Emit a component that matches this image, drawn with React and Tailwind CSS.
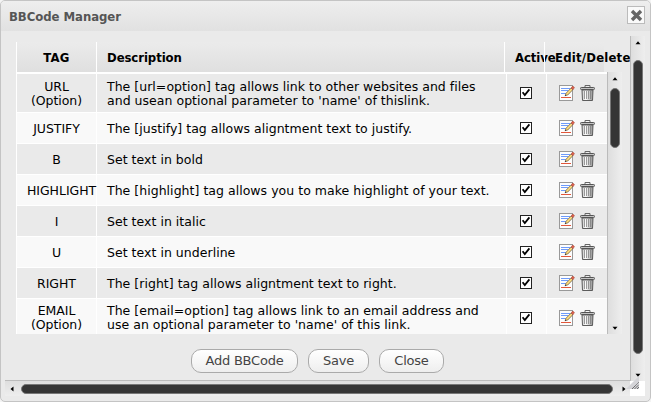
import React from 'react';

const ROWS = [
  { tag: ['URL', '(Option)'], text: ["The [url=option] tag allows link to other websites and files", "and usean optional parameter to 'name' of thislink."], h: 'h-[39px]', cell: 'pt-[2px]' },
  { tag: ['JUSTIFY'], text: ['The [justify] tag allows aligntment text to justify.'], h: 'h-[31px]', cell: 'pt-px' },
  { tag: ['B'], text: ['Set text in bold'], h: 'h-[31px]', cell: 'pt-px' },
  { tag: ['HIGHLIGHT'], text: ['The [highlight] tag allows you to make highlight of your text.'], h: 'h-[31px]', cell: 'pt-px' },
  { tag: ['I'], text: ['Set text in italic'], h: 'h-[31px]', cell: 'pt-px' },
  { tag: ['U'], text: ['Set text in underline'], h: 'h-[31px]', cell: 'pt-px' },
  { tag: ['RIGHT'], text: ['The [right] tag allows aligntment text to right.'], h: 'h-[31px]', cell: 'pt-px' },
  { tag: ['EMAIL', '(Option)'], text: ['The [email=option] tag allows link to an email address and', "use an optional parameter to 'name' of this link."], h: 'h-[39px]', cell: '' },
];

function EditIcon() {
  return (
    <svg width="16" height="16" viewBox="0 0 16 16">
      <rect x=".5" y=".5" width="13" height="15" fill="#fdfdfd" stroke="#999" />
      <path d="M2 3.5h9M2 5.5h7M2 8.5h5" stroke="#6e9bfa" />
      <path d="M2 12.5h10" stroke="#e2573b" />
      <path d="M6.2 10.7 7 8.2 12 3l1.8 1.8-5 5.2z" fill="#f0c65c" stroke="#6d675f" strokeWidth=".7" />
      <path d="m8 8.8 5-5" stroke="#fff0a8" strokeWidth=".8" />
      <path d="m12 3 1.8-2L15.4 2.6 14 4.8z" fill="#dc6049" stroke="#a24b40" strokeWidth=".6" />
      <path d="m5.8 11.2.6-1.6 1 .9z" fill="#333" />
    </svg>
  );
}

function TrashIcon() {
  return (
    <svg width="15" height="16" viewBox="0 0 15 16">
      <defs>
        <linearGradient id="can">
          <stop offset="0" stopColor="#c4c4c4" /><stop offset=".35" stopColor="#fff" /><stop offset="1" stopColor="#8d8d8d" />
        </linearGradient>
      </defs>
      <path d="M5 2V.5h5V2" fill="none" stroke="#666" />
      <path d="M2 5h11l-.5 10.5h-10z" fill="url(#can)" stroke="#5c5c5c" />
      <path d="M4.5 6v8M6.5 6v8M8.5 6v8M10.5 6v8" stroke="#777" strokeWidth=".7" />
      <rect x=".5" y="2.5" width="14" height="2" rx=".8" fill="#c4c4c4" stroke="#555" />
    </svg>
  );
}

function CheckBox() {
  return (
    <svg width="12" height="12" viewBox="0 0 12 12">
      <rect x=".5" y=".5" width="11" height="11" fill="#fff" stroke="#222" />
      <path d="M2.6 5.2 4.8 8 9.4 2.4" fill="none" stroke="#000" strokeWidth="1.8" />
    </svg>
  );
}

function Arrow({ d, className }) {
  return <svg width="6" height="6" viewBox="0 0 6 6" className={className}><path d={d} fill="#000" /></svg>;
}
const UP = 'M0.5 4.3 3 1.3 5.5 4.3z';
const DOWN = 'M0.5 1.7 3 4.7 5.5 1.7z';
const LEFT = 'M4.5 0.5 1.5 3 4.5 5.5z';
const RIGHT = 'M1.5 0.5 4.5 3 1.5 5.5z';

function Row({ row, odd }) {
  return (
    <div className={'flex shrink-0 border-b border-white ' + row.h + (odd ? ' bg-[#f9f9f9]' : ' bg-[#eaeaea]')}>
      <div className={'flex w-[81px] shrink-0 flex-col justify-center border-x border-white px-[10px] text-center ' + row.cell}>
        {row.tag.map((t) => <span key={t} className="block whitespace-nowrap tracking-[-0.05px]">{t}</span>)}
      </div>
      <div className={'flex w-[409px] shrink-0 flex-col justify-center pl-[10px] ' + row.cell}>
        {row.text.map((t) => <span key={t} className="block whitespace-nowrap">{t}</span>)}
      </div>
      <div className="flex w-[40px] shrink-0 items-center justify-center border-l border-white pr-[1px]"><CheckBox /></div>
      <div className="flex w-[61px] shrink-0 items-center gap-[5px] border-l border-white pl-[12px]"><EditIcon /><TrashIcon /></div>
    </div>
  );
}

function Button({ children, className }) {
  return <button className={'flex h-[24px] items-center justify-center whitespace-nowrap rounded-[10px] border border-[#aaa] bg-gradient-to-b from-white to-[#eee] text-[#444] ' + className}>{children}</button>;
}

export default function App() {
  return (
    <div className="h-[402px] w-[651px] overflow-hidden bg-[#f4f4f4] font-['DejaVu_Sans',Verdana,sans-serif] text-[12.5px] leading-[14px] tracking-[0.03px] text-black">
      <div className="flex h-full flex-col overflow-hidden rounded-[5px] border border-[#c4c4c4] bg-[#eaeaea]">
        <header className="flex h-[30px] shrink-0 items-center justify-between bg-gradient-to-b from-[#eee] to-[#e1e1e1] pl-[8px] pr-[5px]">
          <h1 className="whitespace-nowrap pt-[2px] font-['DejaVu_Sans_Condensed','DejaVu_Sans',sans-serif] text-[13px] font-bold tracking-[-0.05px] text-[#555] [font-stretch:condensed]">BBCode Manager</h1>
          <button className="-mt-[2px] flex h-[18px] w-[18px] items-center justify-center border border-[#bbb] bg-[#fafafa]" aria-label="Close dialog">
            <svg width="13" height="13" viewBox="0 0 13 13"><path d="m2 2 9 9M11 2l-9 9" stroke="#666" strokeWidth="3.4" /></svg>
          </button>
        </header>
        <div className="mt-[5px] flex h-[345px] shrink-0 pl-[4px]">
          <main className="w-[625px] shrink-0 overflow-hidden border-b border-[#bbb] pl-[11px] pt-[6px]">
            <div className="flex h-[30px] w-[588px] bg-gradient-to-b from-[#ebebeb] to-[#dfdfdf] font-['DejaVu_Sans_Condensed','DejaVu_Sans',sans-serif] text-[13px] font-bold tracking-[-0.08px] [font-stretch:condensed]">
              <div className="flex w-[81px] shrink-0 items-center justify-center border-x border-white pt-[2px] tracking-[0.3px]">TAG</div>
              <div className="flex w-[407px] shrink-0 items-center pl-[10px] pt-[2px]">Description</div>
              <div className="flex w-[40px] shrink-0 items-center border-l border-white pl-[10px] pt-[2px]">Active</div>
              <div className="flex w-[60px] shrink-0 items-center whitespace-nowrap border-l border-white pl-[10px] pt-[2px] tracking-[0.2px]">Edit/Delete</div>
            </div>
            <div className="flex h-[262px]">
              <div className="w-[591px] shrink-0 overflow-hidden border-t-2 border-white">
                {ROWS.map((row, i) => <Row key={row.tag[0]} row={row} odd={i % 2 === 1} />)}
              </div>
              <div className="flex w-[15px] shrink-0 flex-col items-center border-l border-[#bbb] bg-gradient-to-r from-[#dedede] to-[#eee]">
                <Arrow d={UP} className="mt-[4px] shrink-0" />
                <div className="mt-[6px] h-[60px] w-[10px] shrink-0 rounded-full border border-[#777] bg-[#353535]" />
                <Arrow d={DOWN} className="mb-[3px] mt-auto shrink-0" />
              </div>
            </div>
            <div className="mt-[15px] flex pl-[175px] text-[13px] tracking-[-0.22px]">
              <Button className="w-[107px]">Add BBCode</Button>
              <Button className="ml-[10px] w-[61px]">Save</Button>
              <Button className="ml-[10px] w-[65px]">Close</Button>
            </div>
          </main>
          <div className="flex w-[15px] shrink-0 flex-col items-center border-l border-[#bbb] bg-gradient-to-r from-[#dedede] to-[#eee]">
            <Arrow d={UP} className="mt-[4px] shrink-0" />
            <div className="mt-[14px] h-[294px] w-[10px] shrink-0 rounded-full border border-[#777] bg-[#353535]" />
            <Arrow d={DOWN} className="mb-[3px] mt-auto shrink-0" />
          </div>
        </div>
        <div className="flex h-[15px] shrink-0 pl-[4px]">
          <div className="flex w-[625px] shrink-0 items-center bg-gradient-to-b from-[#dedede] to-[#eee]">
            <Arrow d={LEFT} className="ml-[4px] shrink-0" />
            <div className="ml-[6px] h-[10px] w-[592px] shrink-0 rounded-full border border-[#777] bg-[#353535]" />
            <Arrow d={RIGHT} className="ml-[8px] shrink-0" />
          </div>
          <div className="relative w-[15px] shrink-0 bg-white">
            <svg className="absolute -left-[4px] -top-[5px]" width="14" height="14" viewBox="0 0 14 14">
              <path d="M0 13 13 0v13z" fill="#d4d4d8" />
              <path d="M6 13 13 6M8.5 13 13 8.5M11 13l2-2" stroke="#444" strokeDasharray="1 .6" />
            </svg>
          </div>
        </div>
      </div>
    </div>
  );
}
